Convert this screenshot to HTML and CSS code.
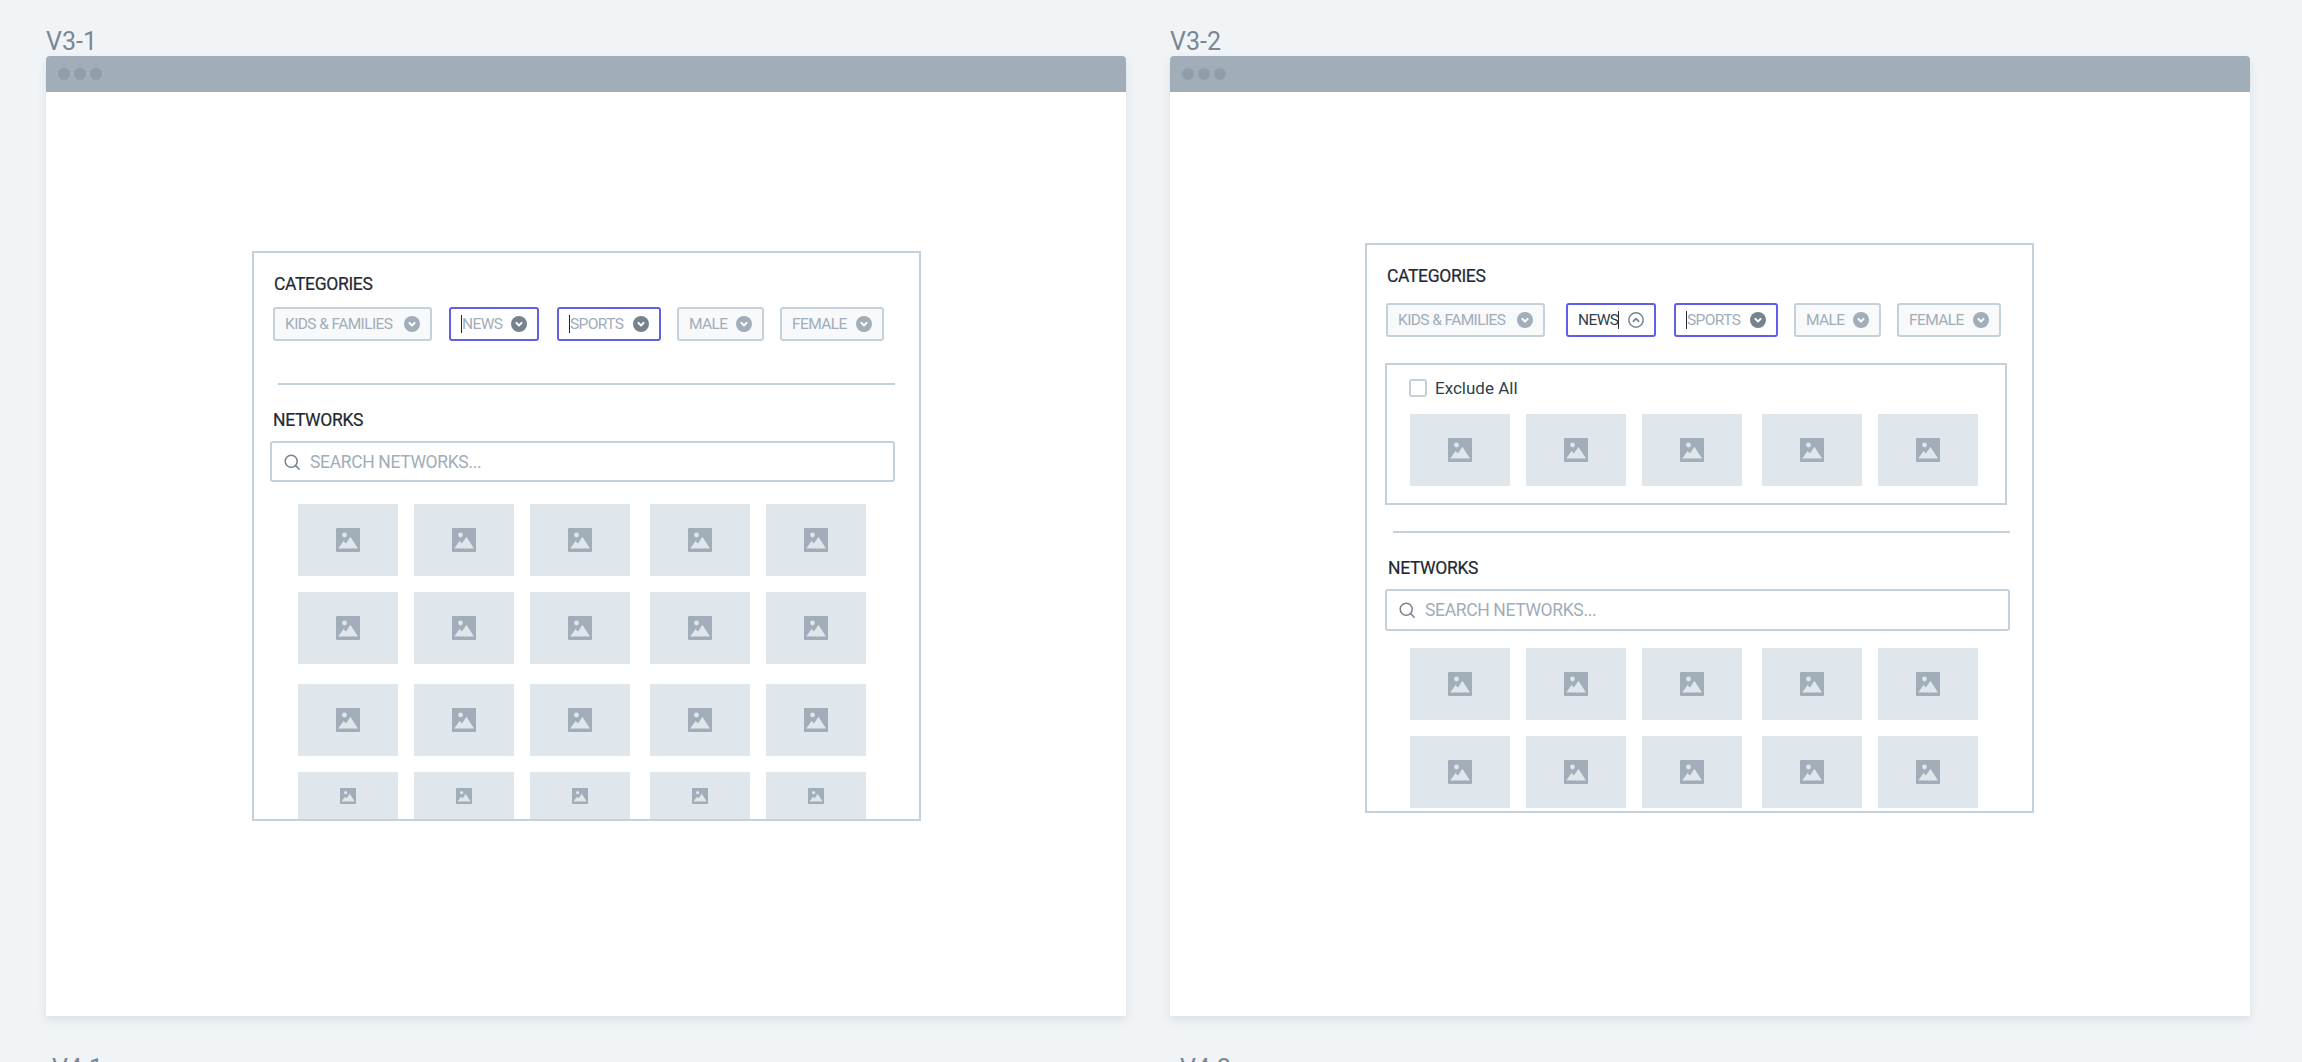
FILE: index.html
```html
<!DOCTYPE html>
<html lang="en">
<head>
<meta charset="utf-8">
<title>V3 wireframes</title>
<link rel="stylesheet" href="styles.css">
</head>
<body>
<svg class="defs" width="0" height="0" aria-hidden="true">
  <symbol id="pic" viewBox="0 0 24 24">
    <rect x="0" y="0" width="24" height="24" rx="1" fill="#a1adb9"/>
    <circle cx="8.5" cy="7" r="2.4" fill="#dfe6ec"/>
    <path d="M2.2 20.4 L7.6 13 L10 15.4 L14.4 8.8 L22 20.4 Z" fill="#dfe6ec"/>
  </symbol>
  <symbol id="down" viewBox="0 0 16 16">
    <circle cx="8" cy="8" r="8" fill="currentColor"/>
    <path d="M5.4 6.9 L8 9.5 L10.6 6.9" fill="none" stroke="#fff" stroke-width="2" stroke-linecap="round" stroke-linejoin="round"/>
  </symbol>
  <symbol id="up" viewBox="0 0 16 16">
    <circle cx="8" cy="8" r="7.2" fill="none" stroke="currentColor" stroke-width="1.5"/>
    <path d="M5.4 9.2 L8 6.6 L10.6 9.2" fill="none" stroke="currentColor" stroke-width="1.8" stroke-linecap="round" stroke-linejoin="round"/>
  </symbol>
  <symbol id="search" viewBox="0 0 16 16">
    <circle cx="7.2" cy="7.2" r="6" fill="none" stroke="currentColor" stroke-width="1.5"/>
    <path d="M11.6 11.6 L15.2 15.2" fill="none" stroke="currentColor" stroke-width="1.5" stroke-linecap="round"/>
  </symbol>
</svg>

<main class="board">
  <section class="cell">
    <h2 class="label">V3-1</h2>
    <div class="window">
      <div class="titlebar"><span class="dot"></span><span class="dot"></span><span class="dot"></span></div>
      <div class="body body-a">
        <div class="panel panel-a">
          <h3 class="heading heading-cat-a">CATEGORIES</h3>
          <div class="chips chips-a">
            <div class="chip w-kids"><span class="chip-text">KIDS &amp; FAMILIES</span><svg class="chip-icon"><use href="#down"/></svg></div>
            <div class="chip chip-focus w-news gap-a1"><span class="chip-text caret-start">NEWS</span><svg class="chip-icon"><use href="#down"/></svg></div>
            <div class="chip chip-focus w-sports gap-2"><span class="chip-text caret-start">SPORTS</span><svg class="chip-icon"><use href="#down"/></svg></div>
            <div class="chip w-male gap-3"><span class="chip-text">MALE</span><svg class="chip-icon"><use href="#down"/></svg></div>
            <div class="chip w-female gap-3"><span class="chip-text">FEMALE</span><svg class="chip-icon"><use href="#down"/></svg></div>
          </div>
          <hr class="rule rule-a">
          <h3 class="heading heading-net-a">NETWORKS</h3>
          <div class="search search-a"><svg class="search-icon"><use href="#search"/></svg><span class="search-text">SEARCH NETWORKS...</span></div>
          <div class="tiles tiles-a">
            <div class="tile-row">
              <div class="tile"><svg class="pic"><use href="#pic"/></svg></div>
              <div class="tile"><svg class="pic"><use href="#pic"/></svg></div>
              <div class="tile"><svg class="pic"><use href="#pic"/></svg></div>
              <div class="tile"><svg class="pic"><use href="#pic"/></svg></div>
              <div class="tile"><svg class="pic"><use href="#pic"/></svg></div>
            </div>
            <div class="tile-row">
              <div class="tile"><svg class="pic"><use href="#pic"/></svg></div>
              <div class="tile"><svg class="pic"><use href="#pic"/></svg></div>
              <div class="tile"><svg class="pic"><use href="#pic"/></svg></div>
              <div class="tile"><svg class="pic"><use href="#pic"/></svg></div>
              <div class="tile"><svg class="pic"><use href="#pic"/></svg></div>
            </div>
            <div class="tile-row row-wide">
              <div class="tile"><svg class="pic"><use href="#pic"/></svg></div>
              <div class="tile"><svg class="pic"><use href="#pic"/></svg></div>
              <div class="tile"><svg class="pic"><use href="#pic"/></svg></div>
              <div class="tile"><svg class="pic"><use href="#pic"/></svg></div>
              <div class="tile"><svg class="pic"><use href="#pic"/></svg></div>
            </div>
            <div class="tile-row">
              <div class="tile tile-short"><svg class="pic pic-small"><use href="#pic"/></svg></div>
              <div class="tile tile-short"><svg class="pic pic-small"><use href="#pic"/></svg></div>
              <div class="tile tile-short"><svg class="pic pic-small"><use href="#pic"/></svg></div>
              <div class="tile tile-short"><svg class="pic pic-small"><use href="#pic"/></svg></div>
              <div class="tile tile-short"><svg class="pic pic-small"><use href="#pic"/></svg></div>
            </div>
          </div>
        </div>
      </div>
    </div>
  </section>

  <section class="cell">
    <h2 class="label">V3-2</h2>
    <div class="window">
      <div class="titlebar"><span class="dot"></span><span class="dot"></span><span class="dot"></span></div>
      <div class="body body-b">
        <div class="panel panel-b">
          <h3 class="heading heading-cat-b">CATEGORIES</h3>
          <div class="chips chips-b">
            <div class="chip w-kids"><span class="chip-text">KIDS &amp; FAMILIES</span><svg class="chip-icon"><use href="#down"/></svg></div>
            <div class="chip chip-focus w-news gap-b1"><span class="chip-text chip-text-on caret-end">NEWS</span><svg class="chip-icon icon-open"><use href="#up"/></svg></div>
            <div class="chip chip-focus w-sports gap-2"><span class="chip-text caret-start">SPORTS</span><svg class="chip-icon"><use href="#down"/></svg></div>
            <div class="chip w-male gap-3"><span class="chip-text">MALE</span><svg class="chip-icon"><use href="#down"/></svg></div>
            <div class="chip w-female gap-3"><span class="chip-text">FEMALE</span><svg class="chip-icon"><use href="#down"/></svg></div>
          </div>
          <div class="exclude">
            <label class="check-row"><span class="checkbox"></span><span class="check-label">Exclude All</span></label>
            <div class="tile-row">
              <div class="tile"><svg class="pic"><use href="#pic"/></svg></div>
              <div class="tile"><svg class="pic"><use href="#pic"/></svg></div>
              <div class="tile"><svg class="pic"><use href="#pic"/></svg></div>
              <div class="tile"><svg class="pic"><use href="#pic"/></svg></div>
              <div class="tile"><svg class="pic"><use href="#pic"/></svg></div>
            </div>
          </div>
          <hr class="rule rule-b">
          <h3 class="heading heading-net-b">NETWORKS</h3>
          <div class="search search-b"><svg class="search-icon"><use href="#search"/></svg><span class="search-text">SEARCH NETWORKS...</span></div>
          <div class="tiles tiles-b">
            <div class="tile-row">
              <div class="tile"><svg class="pic"><use href="#pic"/></svg></div>
              <div class="tile"><svg class="pic"><use href="#pic"/></svg></div>
              <div class="tile"><svg class="pic"><use href="#pic"/></svg></div>
              <div class="tile"><svg class="pic"><use href="#pic"/></svg></div>
              <div class="tile"><svg class="pic"><use href="#pic"/></svg></div>
            </div>
            <div class="tile-row">
              <div class="tile"><svg class="pic"><use href="#pic"/></svg></div>
              <div class="tile"><svg class="pic"><use href="#pic"/></svg></div>
              <div class="tile"><svg class="pic"><use href="#pic"/></svg></div>
              <div class="tile"><svg class="pic"><use href="#pic"/></svg></div>
              <div class="tile"><svg class="pic"><use href="#pic"/></svg></div>
            </div>
          </div>
        </div>
      </div>
    </div>
  </section>

  <section class="cell"><h2 class="label label-next-a">V4-1</h2></section>
  <section class="cell"><h2 class="label label-next-b">V4-2</h2></section>
</main>
</body>
</html>
```
FILE: styles.css
```css
* { box-sizing: border-box; }
html, body { margin: 0; height: 100%; overflow: hidden; }
body {
  background: #f0f4f7;
  font-family: Roboto, "Liberation Sans", sans-serif;
  color: #323f4b;
}
.defs { position: absolute; }

.board {
  display: grid;
  grid-template-columns: 1080px 1080px;
  column-gap: 44px;
  row-gap: 38px;
  padding: 27px 0 0 46px;
}
.label {
  margin: 0;
  height: 29px;
  font-size: 25px;
  font-weight: 400;
  line-height: 29px;
  color: #7b8794;
}
.label-next-a { padding-left: 6px; }
.label-next-b { padding-left: 10px; }

.window {
  height: 960px;
  background: #fff;
  border-radius: 4px 4px 0 0;
  box-shadow: 0 4px 10px rgba(50, 63, 75, 0.1);
}
.titlebar {
  display: flex;
  align-items: center;
  gap: 4px;
  height: 36px;
  padding-left: 12px;
  background: #a1adb9;
  border-radius: 4px 4px 0 0;
}
.dot {
  width: 12px;
  height: 12px;
  border-radius: 50%;
  background: #909eab;
}

.body-a { padding: 159px 0 0 206px; }
.body-b { padding: 151px 0 0 195px; }

.panel {
  width: 669px;
  height: 570px;
  padding-left: 19px;
  border: 2px solid #c4d0da;
  overflow: hidden;
}

.heading {
  margin: 0;
  font-size: 17.5px;
  line-height: 20px;
  font-weight: 400;
  letter-spacing: -0.35px;
  color: #1f2933;
  -webkit-text-stroke: 0.2px #1f2933;
}
.heading-cat-a { margin: 21px 0 0 1px; }
.heading-cat-b { margin: 21px 0 0 1px; }
.heading-net-a { margin: 25px 0 0 0; }
.heading-net-b { margin: 25px 0 0 2px; }

.chips { display: flex; }
.chips-a { margin-top: 13px; }
.chips-b { margin-top: 17px; }
.chip {
  display: flex;
  align-items: center;
  justify-content: space-between;
  flex: none;
  height: 34px;
  padding: 0 10px 0 10px;
  background: #f7f9fb;
  border: 2px solid #c4d0da;
  border-radius: 3px;
}
.chip-focus {
  background: #fff;
  border-color: #5f5fe8;
}
.w-kids { width: 159px; }
.w-news { width: 90px; }
.w-sports { width: 104px; }
.w-male { width: 87px; }
.w-female { width: 104px; }
.gap-a1 { margin-left: 17px; }
.gap-b1 { margin-left: 21px; }
.gap-2 { margin-left: 18px; }
.gap-3 { margin-left: 16px; }

.chip-text {
  font-size: 15.5px;
  line-height: 18px;
  letter-spacing: -0.6px;
  color: #a1adb9;
  white-space: nowrap;
}
.chip-text-on { color: #323f4b; }
.caret-start { border-left: 1px solid #1f2933; }
.caret-end { border-right: 1px solid #1f2933; }
.chip-icon {
  flex: none;
  width: 16px;
  height: 16px;
  color: #a1adb9;
}
.chip-focus .chip-icon { color: #76838f; }

.rule {
  height: 2px;
  margin: 0;
  border: 0;
  background: #c4d0da;
}
.rule-a { width: 617px; margin: 42px 0 0 5px; }
.rule-b { width: 617px; margin: 26px 0 0 7px; }

.search {
  display: flex;
  align-items: center;
  gap: 10px;
  width: 625px;
  background: #fff;
  border: 2px solid #c4d0da;
  border-radius: 3px;
  padding-left: 12px;
}
.search-a { height: 41px; margin: 11px 0 0 -3px; }
.search-b { height: 42px; margin: 11px 0 0 -1px; }
.search-icon {
  flex: none;
  width: 16px;
  height: 16px;
  color: #76838f;
}
.search-text {
  font-size: 17.5px;
  letter-spacing: -0.35px;
  color: #a1adb9;
}

.tiles-a { margin: 22px 0 0 25px; }
.tiles-b { margin: 17px 0 0 24px; }
.tile-row {
  display: flex;
  gap: 16px;
  margin-bottom: 16px;
}
.row-wide { margin-top: 20px; }
.tile {
  display: flex;
  align-items: center;
  justify-content: center;
  flex: none;
  width: 100px;
  height: 72px;
  background: #dfe6ec;
}
.tile:nth-child(4) { margin-left: 4px; }
.tile-short { height: 48px; }
.pic { width: 24px; height: 24px; }
.pic-small { width: 16px; height: 16px; }

.exclude {
  width: 622px;
  height: 142px;
  margin: 26px 0 0 -1px;
  padding: 14px 0 0 22px;
  border: 2px solid #c4d0da;
}
.exclude .tile-row { margin: 17px 0 0 1px; }
.check-row {
  display: flex;
  align-items: center;
  gap: 8px;
  height: 18px;
}
.checkbox {
  width: 18px;
  height: 18px;
  background: #fff;
  border: 2px solid #c4d0da;
  border-radius: 3px;
}
.check-label {
  font-size: 17px;
  line-height: 20px;
  color: #323f4b;
}
```
